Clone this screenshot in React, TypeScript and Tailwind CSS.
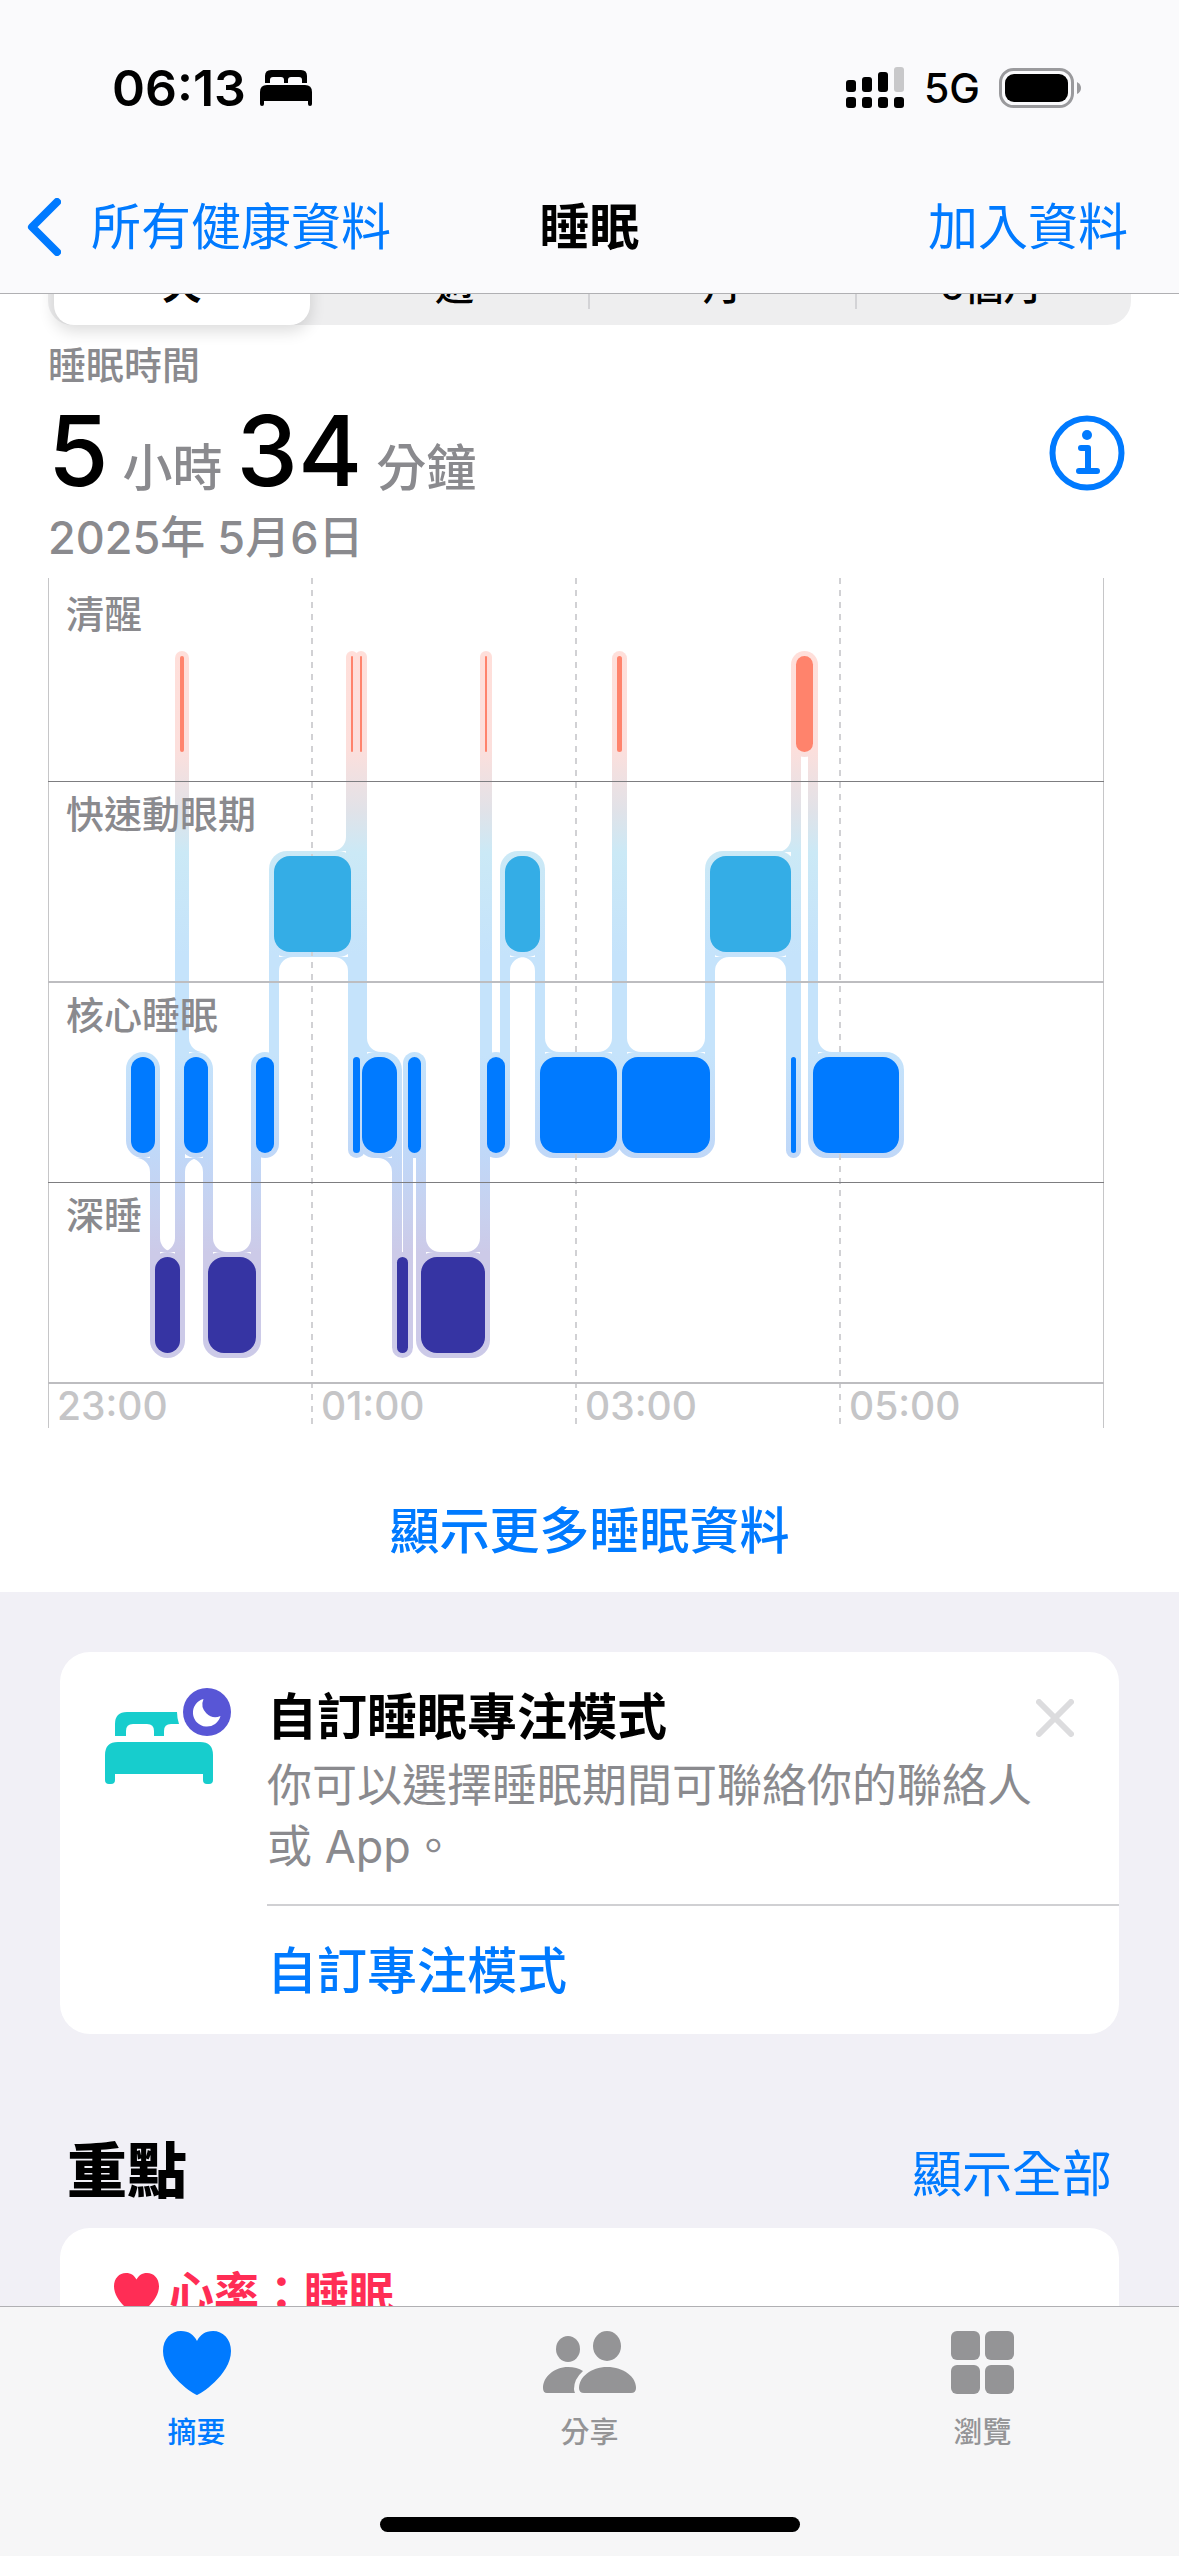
import React from "react";

type Stage = "awake" | "rem" | "core" | "deep";

const STAGES: Record<Stage, { top: number; bottom: number; color: string }> = {
  awake: { top: 656, bottom: 752, color: "#ff836c" },
  rem: { top: 856, bottom: 952, color: "#34ade6" },
  core: { top: 1057, bottom: 1153, color: "#007aff" },
  deep: { top: 1257, bottom: 1353, color: "#3634a3" },
};

const SEGMENTS: { stage: Stage; from: number; to: number }[] = [
  { stage: "core", from: 131, to: 155 },
  { stage: "deep", from: 155, to: 180 },
  { stage: "awake", from: 180, to: 184 },
  { stage: "core", from: 184, to: 208 },
  { stage: "deep", from: 208, to: 256 },
  { stage: "core", from: 256, to: 274 },
  { stage: "rem", from: 274, to: 351 },
  { stage: "awake", from: 351, to: 353 },
  { stage: "core", from: 353, to: 360 },
  { stage: "awake", from: 360, to: 362 },
  { stage: "core", from: 362, to: 397 },
  { stage: "deep", from: 397, to: 408 },
  { stage: "core", from: 408, to: 421 },
  { stage: "deep", from: 421, to: 485 },
  { stage: "awake", from: 485, to: 487 },
  { stage: "core", from: 487, to: 505 },
  { stage: "rem", from: 505, to: 540 },
  { stage: "core", from: 540, to: 617 },
  { stage: "awake", from: 617, to: 622 },
  { stage: "core", from: 622, to: 710 },
  { stage: "rem", from: 710, to: 791 },
  { stage: "core", from: 791, to: 796 },
  { stage: "awake", from: 796, to: 813 },
  { stage: "core", from: 813, to: 899 },
];

const HALO = 5;
const FILLET = 14;
const MIN_FILLET_WIDTH = 24;

function fillet(x: number, y: number, dx: 1 | -1, dy: 1 | -1) {
  const sweep = dx === dy ? 0 : 1;
  return `M${x} ${y}H${x + dx * FILLET}A${FILLET} ${FILLET} 0 0 ${sweep} ${x} ${y + dy * FILLET}Z`;
}

function buildFillets() {
  const out: string[] = [
    fillet(185, 1158, 1, 1),
    fillet(348, 957, -1, 1),
    fillet(791, 852, -1, -1),
  ];
  SEGMENTS.slice(1).forEach((b, i) => {
    const a = SEGMENTS[i];
    const A = STAGES[a.stage];
    const B = STAGES[b.stage];
    const goesDown = B.top > A.top;
    if (a.to - a.from >= MIN_FILLET_WIDTH) {
      out.push(fillet(b.from - HALO, goesDown ? A.bottom + HALO : A.top - HALO, -1, goesDown ? 1 : -1));
    }
    if (b.to - b.from >= MIN_FILLET_WIDTH) {
      out.push(fillet(b.from + HALO, goesDown ? B.top - HALO : B.bottom + HALO, 1, goesDown ? -1 : 1));
    }
  });
  return out;
}

function SleepChart() {
  const rows: { y: number; thickness: number; color: string; label: string }[] = [
    { y: 781, thickness: 1, color: "#7d7d80", label: "清醒" },
    { y: 981, thickness: 2, color: "#bdbdc0", label: "快速動眼期" },
    { y: 1182, thickness: 1, color: "#7d7d80", label: "核心睡眠" },
    { y: 1382, thickness: 2, color: "#bdbdc0", label: "深睡" },
  ];
  const hours: [number, string][] = [
    [48, "23:00"],
    [312, "01:00"],
    [576, "03:00"],
    [840, "05:00"],
  ];
  return (
    <svg viewBox="0 578 1179 850" className="block w-full" role="img" aria-label="睡眠階段圖表">
      <defs>
        <linearGradient id="halo" gradientUnits="userSpaceOnUse" x1="0" x2="0" y1="651" y2="1358">
          <stop offset="0" stopColor="#ffdfda" />
          <stop offset="0.14" stopColor="#fcdfdc" />
          <stop offset="0.225" stopColor="#e1e2e8" />
          <stop offset="0.285" stopColor="#cbe9f6" />
          <stop offset="0.43" stopColor="#c5e3fb" />
          <stop offset="0.57" stopColor="#c5e3fb" />
          <stop offset="0.71" stopColor="#c0d8f8" />
          <stop offset="0.8" stopColor="#c8d0ee" />
          <stop offset="0.85" stopColor="#cccae8" />
          <stop offset="1" stopColor="#cccae8" />
        </linearGradient>
      </defs>
      <g fill="url(#halo)">
        {SEGMENTS.map((s) => {
          const w = s.to - s.from + HALO * 2;
          const { top, bottom } = STAGES[s.stage];
          return (
            <rect
              key={s.from}
              x={s.from - HALO}
              y={top - HALO}
              width={w}
              height={bottom - top + HALO * 2}
              rx={Math.min(w / 2, 18)}
            />
          );
        })}
        {SEGMENTS.slice(1).map((b, i) => {
          const A = STAGES[SEGMENTS[i].stage];
          const B = STAGES[b.stage];
          const upper = A.top < B.top ? A : B;
          const lower = A.top < B.top ? B : A;
          return (
            <rect
              key={b.from}
              x={b.from - HALO}
              y={upper.bottom - 16}
              width={HALO * 2}
              height={lower.top - upper.bottom + 32}
            />
          );
        })}
        {buildFillets().map((d) => (
          <path key={d} d={d} />
        ))}
      </g>
      <g stroke="#d1d1d4" strokeWidth="2">
        <path d="M48 578V1428M1103 578V1428" strokeWidth="1" stroke="#c6c6c8" shapeRendering="crispEdges" />
        <path d="M312 578V1428M576 578V1428M840 578V1428" strokeDasharray="6 6" />
      </g>
      {rows.map(({ y, thickness, color, label }) => (
        <g key={label}>
          <rect x="48" y={y} width="1056" height={thickness} fill={color} />
          <text x="66" y={y - 153} fontSize="38" fontWeight="500" fill="#8a8a8e">
            {label}
          </text>
        </g>
      ))}
      {hours.map(([x, label]) => (
        <text key={label} x={x + 9} y="1420" fontSize="39" fontWeight="500" fill="#c5c5c7">
          {label}
        </text>
      ))}
      {SEGMENTS.map((s) => {
        const { top, bottom, color } = STAGES[s.stage];
        const w = s.to - s.from;
        return (
          <rect key={s.from} x={s.from} y={top} width={w} height={bottom - top} rx={Math.min(w / 2, 16)} fill={color} />
        );
      })}
    </svg>
  );
}

function StatusBar() {
  return (
    <div className="flex h-[176px] items-center justify-between pr-[98px] pl-28 text-black">
      <div className="flex items-center gap-3.5">
        <span className="text-[50px] leading-none font-semibold">06:13</span>
        <svg viewBox="0 0 52 36" className="w-[52px]" aria-label="睡眠模式">
          <path d="M5 13V6Q5 0 11 0H41Q47 0 47 6V13H42V10Q42 7 39 7H31Q28 7 28 10V13H24V10Q24 7 21 7H13Q10 7 10 10V13ZM0 22Q0 15 7 15H45Q52 15 52 22V34Q52 36 50 36Q48 36 48 34V31H4V34Q4 36 2 36Q0 36 0 34Z" />
        </svg>
      </div>
      <div className="flex items-center gap-[19px]">
        <svg viewBox="0 0 59 42" className="w-[59px]" aria-label="訊號">
          <rect x="0" y="13" width="10" height="12" rx="3" />
          <rect x="16" y="10" width="10" height="15" rx="3" />
          <rect x="32" y="5" width="10" height="20" rx="3" />
          <rect x="48" y="0" width="10" height="25" rx="3" fill="#c8c8ca" />
          <rect x="0" y="30" width="10" height="11" rx="3" />
          <rect x="16" y="30" width="10" height="11" rx="3" />
          <rect x="32" y="30" width="10" height="11" rx="3" />
          <rect x="48" y="30" width="10" height="11" rx="3" />
        </svg>
        <span className="text-[41px] leading-none font-medium">5G</span>
        <svg viewBox="0 0 82 40" className="w-[82px]" aria-label="電池">
          <rect x="1.5" y="1.5" width="72" height="37" rx="13" fill="none" stroke="#9a9a9d" strokeWidth="3" />
          <rect x="6" y="6" width="63" height="28" rx="9" />
          <path d="M78 14Q82 16 82 20Q82 24 78 26Z" fill="#9a9a9d" />
        </svg>
      </div>
    </div>
  );
}

function BedIcon() {
  return (
    <svg viewBox="0 0 126 96" className="w-[126px]" aria-hidden="true">
      <g fill="#17cdcd">
        <path d="M10 48V36Q10 24 22 24H72Q72 30 74 36H66Q59 36 59 43V48H49V43Q49 36 42 36H28Q21 36 21 43V48Z" />
        <path d="M0 67Q0 54 13 54H95Q108 54 108 67V92Q108 96 104 96H102Q98 96 98 92V86H10V92Q10 96 6 96H4Q0 96 0 92Z" />
      </g>
      <circle cx="102" cy="24" r="24" fill="#5856d6" />
      <path d="M98.500 11A14 14 0 1 0 115.500 28A13 13 0 0 1 98.500 11Z" fill="#fff" />
    </svg>
  );
}

const HEART =
  "M34 64C32 64 0 44 0 20C0 8 8 0 18 0C26 0 31 4 34 10C37 4 42 0 50 0C60 0 68 8 68 20C68 44 36 64 34 64Z";

export default function App() {
  return (
    <div className="flex h-screen flex-col overflow-hidden bg-white font-['Inter','Noto_Sans_CJK_TC',sans-serif] text-black">
      <header className="shrink-0 border-b border-[#b0b0b3] bg-[#fafafc]">
        <StatusBar />
        <nav className="grid h-[117px] grid-cols-[1fr_auto_1fr] items-start px-[27px] pt-3.5 text-[50px] leading-[74px] whitespace-nowrap">
          <a href="#all" className="flex items-center gap-[30px] text-[#007aff]">
            <svg viewBox="0 0 34 58" className="w-[34px]" aria-hidden="true">
              <path d="M30 4L5 29L30 54" fill="none" stroke="currentColor" strokeWidth="8" strokeLinecap="round" strokeLinejoin="round" />
            </svg>
            所有健康資料
          </a>
          <h1 className="font-bold">睡眠</h1>
          <button className="justify-self-end pr-6 text-[#007aff]">加入資料</button>
        </nav>
      </header>

      <main className="min-h-0 flex-1 overflow-hidden bg-[#f1f0f6]">
        <div className="flex flex-col bg-white">
          <div className="mx-12 -mt-[66px] grid h-[97px] shrink-0 grid-cols-4 rounded-3xl bg-[#eeeeef] p-1.5 text-[39px] font-medium">
            <button className="mr-3 rounded-[20px] bg-white pt-3 font-semibold shadow-[0_6px_16px_rgba(0,0,0,0.14)]">天</button>
            <button className="my-4 border-r-2 border-[#d3d3d6] pt-3 leading-[47px]">週</button>
            <button className="my-4 border-r-2 border-[#d3d3d6] pt-3 leading-[47px]">月</button>
            <button className="my-4 pt-3 leading-[47px]">6個月</button>
          </div>

          <section className="flex h-[253px] items-start justify-between pr-[54px] pl-12">
            <div className="flex flex-col pt-4 font-medium text-[#8a8a8e]">
              <h2 className="text-[38px] leading-[48px]">睡眠時間</h2>
              <p className="mt-3 flex items-baseline gap-3.5 text-[50px] leading-[100px]">
                <span className="text-[98px] text-black">5</span>
                小時
                <span className="text-[98px] text-black">34</span>
                分鐘
              </p>
              <p className="text-[45px] leading-[40px]">2025年 5月6日</p>
            </div>
            <button aria-label="資訊" className="mt-[90px]">
              <svg viewBox="0 0 76 76" className="w-[76px]" aria-hidden="true">
                <circle cx="38" cy="38" r="34.500" fill="none" stroke="#007aff" strokeWidth="6" />
                <circle cx="38" cy="20" r="5" fill="#007aff" />
                <path d="M32 33H39V56M30 56H48" fill="none" stroke="#007aff" strokeWidth="6" strokeLinecap="round" strokeLinejoin="round" />
              </svg>
            </button>
          </section>

          <SleepChart />

          <button className="h-[164px] pt-[65px] pb-[23px] text-[50px] leading-[76px] font-medium text-[#007aff]">
            顯示更多睡眠資料
          </button>
        </div>

        <section className="mx-[60px] mt-[60px] grid grid-cols-[207px_1fr] rounded-[30px] bg-white">
          <div className="pt-9 pl-[45px]">
            <BedIcon />
          </div>
          <div>
            <div className="flex items-start justify-between pt-[31px] pr-[45px]">
              <h3 className="text-[50px] leading-[68px] font-bold">自訂睡眠專注模式</h3>
              <button aria-label="關閉" className="pt-4">
                <svg viewBox="0 0 38 38" className="w-[38px]" aria-hidden="true">
                  <path d="M3 3L35 35M35 3L3 35" stroke="#dcdcde" strokeWidth="6" strokeLinecap="round" />
                </svg>
              </button>
            </div>
            <p className="mt-1 pr-[80px] pb-[27px] text-[45px] leading-[61px] text-[#8a8a8e]">
              你可以選擇睡眠期間可聯絡你的聯絡人或 App。
            </p>
            <a href="#focus" className="block border-t-2 border-[#d0d0d3] pt-[27px] pb-[25px] text-[50px] leading-[76px] font-medium text-[#007aff]">
              自訂專注模式
            </a>
          </div>
        </section>

        <div className="mx-[67px] mt-[97px] flex items-end justify-between">
          <h2 className="text-[60px] leading-[80px] font-black">重點</h2>
          <a href="#highlights" className="text-[50px] leading-[74px] text-[#007aff]">顯示全部</a>
        </div>
        <section className="mx-[60px] mt-[17px] rounded-[30px] bg-white px-[54px] pt-8 pb-24">
          <h3 className="flex items-center gap-2.5 text-[45px] leading-[68px] font-bold text-[#ff2d55]">
            <svg viewBox="0 0 68 64" className="w-[45px] fill-current" aria-hidden="true">
              <path d={HEART} />
            </svg>
            心率：睡眠
          </h3>
        </section>
      </main>

      <footer className="flex h-[250px] shrink-0 flex-col items-center justify-between border-t border-[#b0b0b3] bg-[#f6f6f7] pt-6 pb-6">
        <nav className="grid w-full grid-cols-3 text-[29px] leading-[40px] font-medium text-[#949496]">
          <a href="#summary" className="flex flex-col items-center gap-[18px] text-[#007aff]">
            <svg viewBox="0 0 68 64" className="h-16 fill-current" aria-hidden="true">
              <path d={HEART} />
            </svg>
            摘要
          </a>
          <a href="#sharing" className="flex flex-col items-center gap-[18px]">
            <svg viewBox="0 0 94 64" className="h-16 fill-current" aria-hidden="true">
              <ellipse cx="25" cy="18" rx="12" ry="13" />
              <ellipse cx="64" cy="15" rx="14" ry="15" />
              <path d="M4 62Q0 62 0 57C0 46 11 36 25 36Q34 36 40 40Q31 48 31 58Q31 60 32 62Z" />
              <path d="M41 62Q36 62 36 57C36 46 48 36 64 36C81 36 93 46 93 57Q93 62 88 62Z" />
            </svg>
            分享
          </a>
          <a href="#browse" className="flex flex-col items-center gap-[18px]">
            <svg viewBox="0 0 64 64" className="h-16 fill-current" aria-hidden="true">
              <rect x="0" y="0" width="29" height="29" rx="6" />
              <rect x="34" y="0" width="29" height="29" rx="6" />
              <rect x="0" y="34" width="29" height="29" rx="6" />
              <rect x="34" y="34" width="29" height="29" rx="6" />
            </svg>
            瀏覽
          </a>
        </nav>
        <div className="h-[15px] w-[420px] rounded-full bg-black" />
      </footer>
    </div>
  );
}
